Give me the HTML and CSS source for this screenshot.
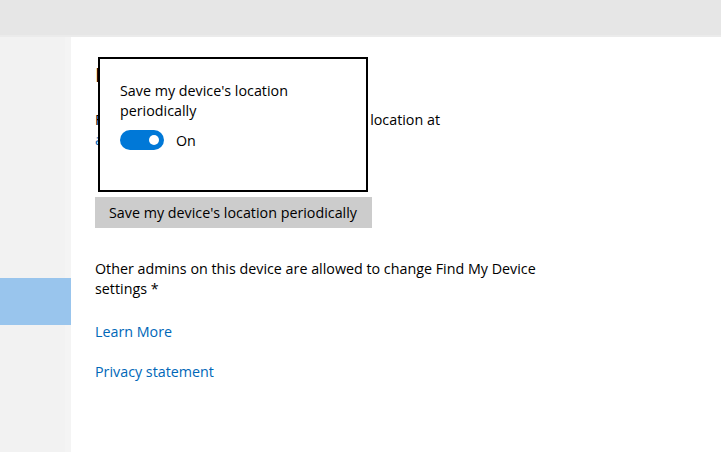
FILE: index.html
```html
<!DOCTYPE html>
<html>
<head>
<meta charset="utf-8">
<link rel="stylesheet" href="styles.css">
</head>
<body>
<div class="topbar"></div>
<div class="layout">
  <aside class="sidebar">
    <div class="nav-item selected"></div>
  </aside>
  <main class="content">
    <h1 class="heading">Find My Device</h1>
    <p class="desc">Find My Device can help find the device's location at<br><a class="link" href="#">account.microsoft.com/devices</a></p>
    <button class="btn">Save my device's location periodically</button>
    <p class="admins">Other admins on this device are allowed to change Find My Device settings *</p>
    <a class="link block first" href="#">Learn More</a>
    <a class="link block" href="#">Privacy statement</a>
    <div class="popup">
      <div class="popup-title">Save my device's location periodically</div>
      <div class="toggle-row">
        <span class="toggle"><span class="knob"></span></span>
        <span class="toggle-label">On</span>
      </div>
    </div>
  </main>
</div>
</body>
</html>
```
FILE: styles.css
```css
* { box-sizing: border-box; }
html, body { margin: 0; padding: 0; }
body {
  width: 721px;
  height: 452px;
  overflow: hidden;
  background: #ffffff;
  font-family: "Open Sans", "Noto Sans", sans-serif;
  font-size: 14.3px;
  color: #000;
}
.topbar {
  height: 37px;
  background: #e6e6e6;
  border-bottom: 2px solid #ebebeb;
}
.layout {
  display: flex;
  height: 415px;
}
.sidebar {
  width: 71px;
  background: #f2f2f2;
  border-right: 6px solid #f4f4f4;
  padding-top: 241px;
}
.nav-item.selected {
  height: 47px;
  background: #99c5ed;
  margin-right: -6px;
}
.content {
  position: relative;
  flex: 1;
  padding-left: 24px;
}
.heading {
  margin: 26px 0 0;
  font-size: 20px;
  font-weight: 400;
  line-height: 24px;
}
.desc {
  margin: 23px 0 0;
  line-height: 20px;
}
.link {
  color: #0067b8;
  text-decoration: none;
}
.link.block { display: block; line-height: 20px; }
.btn {
  display: block;
  margin-top: 47px;
  height: 31px;
  width: 277px;
  border: none;
  background: #cccccc;
  font-family: inherit;
  font-size: 14.3px;
  color: #000;
  text-align: left;
  padding: 0 14px;
}
.admins {
  margin: 31px 0 0;
  width: 480px;
  line-height: 20px;
}
.link.block.first { margin-top: 23px; }
.link.block + .link.block { margin-top: 20px; }
.popup {
  position: absolute;
  left: 27px;
  top: 20px;
  width: 270px;
  height: 135px;
  background: #fff;
  border: 2px solid #000;
  padding: 22px 20px 0 20px;
}
.popup-title {
  line-height: 20px;
  width: 200px;
}
.toggle-row {
  display: flex;
  align-items: center;
  gap: 12px;
  margin-top: 9px;
}
.toggle {
  width: 44px;
  height: 20px;
  border-radius: 10px;
  background: #0078d7;
  position: relative;
}
.knob {
  position: absolute;
  right: 5px;
  top: 5px;
  width: 10px;
  height: 10px;
  border-radius: 50%;
  background: #fff;
}
```
